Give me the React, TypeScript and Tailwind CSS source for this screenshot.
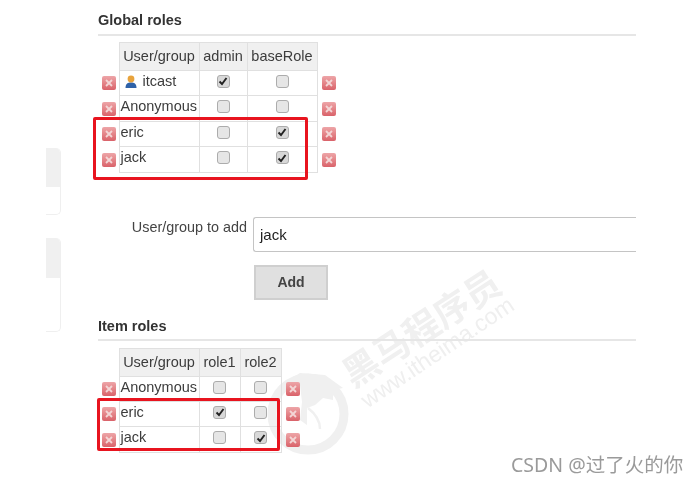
const font = { fontFamily: '"Liberation Sans", Arial, sans-serif' };

function Del() {
  return (
    <span className="flex h-[14px] w-[14px] items-center justify-center rounded-[2px] bg-gradient-to-b from-[#eda5a8] to-[#d9626a]">
      <svg width="8" height="8" viewBox="0 0 8 8">
        <path d="M1 1 L7 7 M7 1 L1 7" stroke="#f3d6d6" strokeWidth="1.8" />
      </svg>
    </span>
  );
}

function Check({ on }: { on: boolean }) {
  return (
    <span className={`mx-auto flex h-[13px] w-[13px] items-center justify-center rounded-[3px] border border-[#acacac] ${on ? "bg-[#d8d8d8]" : "bg-[#e6e6e6]"}`}>
      {on && (
        <svg width="10" height="10" viewBox="0 0 10 10">
          <path d="M1.5 5.5 L4 8 L8.5 2" fill="none" stroke="#222" strokeWidth="1.9" />
        </svg>
      )}
    </span>
  );
}

function Person() {
  return (
    <svg width="12" height="13" viewBox="0 0 12 13" className="mr-[6px] ml-[4px] inline-block align-[-2px]">
      <path d="M0.5 13 C0.5 8.5 3 7.5 6 7.5 C9 7.5 11.5 8.5 11.5 13 Z" fill="#2f62a8" />
      <circle cx="6" cy="4" r="3.4" fill="#e8a33c" />
    </svg>
  );
}

type Row = { name: string; icon?: boolean; h: number; checks: boolean[] };

function RoleTable({ cols, widths, rows, headH }: { cols: string[]; widths: number[]; rows: Row[]; headH: number }) {
  return (
    <table className="table-fixed border-collapse text-[14.5px] leading-none text-[#3c3c3c]">
      <colgroup>
        <col className="w-[21px]" />
        {widths.map((w, i) => (
          <col key={i} style={{ width: w }} />
        ))}
        <col className="w-[24px]" />
      </colgroup>
      <tbody>
        <tr>
          <td />
          {cols.map((c) => (
            <th key={c} style={{ height: headH }} className="border border-[#e0e0e0] bg-[#f0f0f0] p-0 pb-[1px] text-center font-normal">
              {c}
            </th>
          ))}
          <td />
        </tr>
        {rows.map((r) => (
          <tr key={r.name} style={{ height: r.h }}>
            <td className="p-0 pl-[4px]">
              <Del />
            </td>
            <td className="border border-[#e0e0e0] p-0 pb-[4px] pl-[1px]">
              {r.icon && <Person />}
              {r.name}
            </td>
            {r.checks.map((c, i) => (
              <td key={i} className="border border-[#e0e0e0] p-0 pb-[4px]">
                <Check on={c} />
              </td>
            ))}
            <td className="p-0 pl-[4px]">
              <Del />
            </td>
          </tr>
        ))}
      </tbody>
    </table>
  );
}

export default function App() {
  return (
    <div style={font} className="relative flex h-[483px] w-[697px] overflow-hidden bg-white blur-[0.5px]">
      {/* watermark */}
      <div className="pointer-events-none absolute left-[330px] top-[308px] origin-center -rotate-[33deg] whitespace-nowrap text-[36px] leading-none font-bold text-[#f0f0f0]" style={{ fontFamily: '"Noto Sans CJK SC", sans-serif' }}>
        黑马程序员
      </div>
      <div className="pointer-events-none absolute left-[348px] top-[341px] origin-center -rotate-[34deg] whitespace-nowrap text-[23px] leading-none text-[#efefef]">
        www.itheima.com
      </div>
      <svg className="pointer-events-none absolute left-[265px] top-[365px]" width="95" height="95" viewBox="0 0 95 95">
        <circle cx="43" cy="49" r="36" fill="none" stroke="#f0f0f0" strokeWidth="9" />
        <path d="M20 17 L35 20 L37 37 L35 55 L42 60 L42 43 L50 40 L58 33 L68 35 L68 25 L78 23 L60 10 L35 8 Z" fill="#f0f0f0" />
        <path d="M43 43 C52 50 55 56 55 64" fill="none" stroke="#f0f0f0" strokeWidth="2.5" />
      </svg>

      {/* left edge panels */}
      <div className="flex w-[61px] shrink-0 flex-col gap-[23px] pl-[46px] pt-[148px]">
        <div className="h-[67px] w-[15px] overflow-hidden rounded-r-[5px] border-r border-b border-[#efefef]">
          <div className="h-[39px] bg-[#f0f0f0]" />
        </div>
        <div className="h-[94px] w-[15px] overflow-hidden rounded-r-[5px] border-r border-b border-[#efefef]">
          <div className="h-[40px] bg-[#f0f0f0]" />
        </div>
      </div>

      {/* main column */}
      <div className="relative ml-[37px] flex w-[538px] shrink-0 flex-col">
        <h2 className="flex h-[36px] items-end border-b-2 border-[#e6e6e6] pb-[7px] text-[14.5px] leading-none font-bold text-[#333]">
          Global roles
        </h2>
        <div className="mt-[6px]">
          <RoleTable
            cols={["User/group", "admin", "baseRole"]}
            widths={[80, 48, 70]}
            headH={28}
            rows={[
              { name: "itcast", icon: true, h: 25, checks: [true, false] },
              { name: "Anonymous", h: 26, checks: [false, false] },
              { name: "eric", h: 25, checks: [false, true] },
              { name: "jack", h: 26, checks: [false, true] },
            ]}
          />
        </div>

        <div className="mt-[44px] flex">
          <label className="w-[155px] pt-[2px] pr-[6px] text-right text-[14.4px] leading-[17px] text-[#444]">
            User/group to add
          </label>
          <div className="flex h-[35px] w-[383px] items-center rounded-l-[3px] border border-r-0 border-[#c4c4c4] pt-[1px] pl-[6px] text-[15px] text-[#222]">
            jack
          </div>
        </div>
        <button className="mt-[13px] ml-[156px] h-[35px] w-[74px] border-2 border-[#cfcfcf] bg-[#e0e0e0] text-[14px] font-bold text-[#444]">
          Add
        </button>

        <h2 className="flex h-[41px] items-end border-b-2 border-[#e6e6e6] pb-[6px] text-[14.5px] leading-none font-bold text-[#333]">
          Item roles
        </h2>
        <div className="mt-[7px]">
          <RoleTable
            cols={["User/group", "role1", "role2"]}
            widths={[80, 41, 41]}
            headH={28}
            rows={[
              { name: "Anonymous", h: 25, checks: [false, false] },
              { name: "eric", h: 25, checks: [true, false] },
              { name: "jack", h: 26, checks: [false, true] },
            ]}
          />
        </div>

        {/* annotation rectangles */}
        <div className="pointer-events-none absolute left-[-5px] top-[117px] h-[63px] w-[215px] rounded-[2px] border-[3px] border-[#e8141f]" />
        <div className="pointer-events-none absolute left-[-1px] top-[398px] h-[53px] w-[183px] rounded-[2px] border-[3px] border-[#e8141f]" />
      </div>

      <div className="absolute left-[511px] top-[454px] text-[19.5px] leading-[22px] whitespace-nowrap text-[#9a9a9a]" style={{ fontFamily: '"Noto Sans", "Noto Sans CJK SC", sans-serif' }}>
        CSDN @过了火的你
      </div>
    </div>
  );
}
